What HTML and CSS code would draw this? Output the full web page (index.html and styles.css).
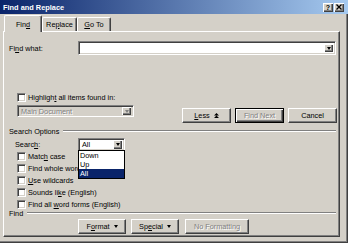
FILE: index.html
```html
<!DOCTYPE html>
<html lang="en">

<head>
    <meta charset="UTF-8">
    <title>Find and Replace</title>
    <link rel="stylesheet" href="styles.css">
</head>

<body>
    <div class="dialog">
        <!--title bar-->
        <div class="titlebar">
            <span class="title">Find and Replace</span>
            <div class="tbtns">
                <span class="tbtn">?</span>
                <span class="tbtn">
                    <svg width="6" height="6" viewBox="0 0 6 6"><path d="M0.5 0.5L5.5 5.5M5.5 0.5L0.5 5.5" stroke="#000" stroke-width="1.3"/></svg>
                </span>
            </div>
        </div>

        <div class="body">
            <!--tabs-->
            <div class="tabs">
                <div class="tab active t-find"><span>Fin<u>d</u></span></div>
                <div class="tab t-replace"><span>Re<u>p</u>lace</span></div>
                <div class="tab t-goto"><span><u>G</u>o To</span></div>
            </div>

            <div class="panel">
                <!--find what-->
                <div class="row row-find">
                    <label class="lbl">Fi<u>n</u>d what:</label>
                    <div class="combo combo-find">
                        <span class="val"></span>
                        <span class="arrow"><i class="tri"></i></span>
                    </div>
                </div>

                <!--highlight-->
                <div class="row row-hl">
                    <span class="chk"></span>
                    <span>Highligh<u>t</u> all items found in:</span>
                </div>

                <div class="row row-doc">
                    <div class="combo combo-doc disabled">
                        <span class="val">Main Document</span>
                        <span class="arrow"><i class="tri"></i></span>
                    </div>
                    <div class="btns">
                        <span class="btn"><span><u>L</u>ess</span>
                            <svg class="dbl" width="5" height="5" viewBox="0 0 5 5"><path d="M2.5 0L5 2.5H0zM2.5 2.5L5 5H0z" fill="#000"/></svg>
                        </span>
                        <span class="btn default disabled"><span>Find Next</span></span>
                        <span class="btn"><span>Cancel</span></span>
                    </div>
                </div>

                <!--search options-->
                <div class="group">
                    <span>Search Options</span>
                    <span class="line"></span>
                </div>

                <div class="row row-search">
                    <label class="lbl">Searc<u>h</u>:</label>
                    <div class="dd">
                        <div class="combo combo-search">
                            <span class="val">All</span>
                            <span class="arrow"><i class="tri"></i></span>
                        </div>
                        <ul class="list">
                            <li>Down</li>
                            <li>Up</li>
                            <li class="sel">All</li>
                        </ul>
                    </div>
                </div>

                <div class="opts">
                    <div class="opt"><span class="chk"></span><span>Matc<u>h</u> case</span></div>
                    <div class="opt"><span class="chk"></span><span>Find whole words onl<u>y</u></span></div>
                    <div class="opt"><span class="chk"></span><span><u>U</u>se wildcards</span></div>
                    <div class="opt"><span class="chk"></span><span>Sounds li<u>k</u>e (English)</span></div>
                    <div class="opt"><span class="chk"></span><span>Find all <u>w</u>ord forms (English)</span></div>
                </div>

                <!--find group-->
                <div class="group group-find">
                    <span>Find</span>
                    <span class="line"></span>
                </div>

                <div class="row row-fmt">
                    <span class="btn b-fmt"><span>F<u>o</u>rmat</span><i class="tri"></i></span>
                    <span class="btn b-spc"><span>Sp<u>e</u>cial</span><i class="tri"></i></span>
                    <span class="btn b-nof disabled"><span>No Formatting</span></span>
                </div>
            </div>
        </div>
    </div>
</body>

</html>
```

FILE: styles.css
```css
html,
body,
ul {
    margin: 0;
    padding: 0;
}

body {
    background: #d4d0c8;
    font: 7.3px "Liberation Sans", Arial, sans-serif;
    color: #000;
    overflow: hidden;
}

u {
    text-decoration: underline;
}

/*dialog frame*/
.dialog {
    width: 348px;
    height: 243px;
    background: #d4d0c8;
    box-shadow: inset -1px -1px #404040, inset -2px -2px #808080;
}

/*title bar*/
.titlebar {
    height: 14px;
    padding: 0 4px 0 3px;
    display: flex;
    align-items: center;
    justify-content: space-between;
    background: linear-gradient(to right, #0a246a, #a6caf0);
    color: #fff;
    font-weight: bold;
    font-size: 7.4px;
}

.tbtns {
    display: flex;
    gap: 1px;
}

.tbtn {
    width: 10px;
    height: 9px;
    display: flex;
    align-items: center;
    justify-content: center;
    background: #d4d0c8;
    color: #000;
    font-size: 7px;
    box-shadow: inset 1px 1px #fff, inset -1px -1px #404040, inset -2px -2px #808080;
}

.body {
    padding: 1px 0 0 3px;
}

/*tabs*/
.tabs {
    display: flex;
    align-items: flex-end;
    height: 16px;
    padding-left: 1px;
}

.tab {
    height: 14px;
    box-sizing: border-box;
    display: flex;
    align-items: center;
    justify-content: center;
    border: 1px solid;
    border-color: #fff #404040 transparent #fff;
    border-bottom: none;
    border-radius: 2px 2px 0 0;
    box-shadow: inset -1px 0 #808080;
    background: #d4d0c8;
}

.tab.active {
    height: 17px;
    margin-bottom: -1px;
    position: relative;
    z-index: 1;
}

.t-find {
    width: 38px;
}

.t-replace {
    width: 35px;
}

.t-goto {
    width: 34px;
}

/*panel*/
.panel {
    width: 337px;
    height: 206px;
    box-sizing: border-box;
    border: 1px solid;
    border-color: #fff #404040 #404040 #fff;
    box-shadow: inset -1px -1px #808080;
    display: flex;
    flex-direction: column;
}

.row {
    display: flex;
    align-items: center;
}

.lbl {
    width: 69px;
    padding-left: 5px;
}

/*combo box*/
.combo {
    box-sizing: border-box;
    display: flex;
    align-items: center;
    justify-content: space-between;
    padding: 2px 2px 2px 3px;
    background: #fff;
    border: 1px solid;
    border-color: #808080 #fff #fff #808080;
    box-shadow: inset 1px 1px #404040, inset -1px -1px #d4d0c8;
}

.arrow {
    width: 9px;
    align-self: stretch;
    display: flex;
    align-items: center;
    justify-content: center;
    background: #d4d0c8;
    box-shadow: inset 1px 1px #fff, inset -1px -1px #404040, inset -2px -2px #808080;
}

.tri {
    display: inline-block;
    width: 0;
    height: 0;
    border-left: 2.5px solid transparent;
    border-right: 2.5px solid transparent;
    border-top: 3px solid #000;
}

.combo.disabled {
    background: #d4d0c8;
}

.disabled .val,
.btn.disabled {
    color: #808080;
    text-shadow: 1px 1px #fff;
}

.disabled .tri {
    border-top-color: #808080;
}

.row-find {
    margin-top: 9px;
    height: 14px;
}

.combo-find {
    width: 258px;
    height: 14px;
}

/*checkbox*/
.chk {
    width: 9px;
    height: 9px;
    box-sizing: border-box;
    margin-right: 2px;
    background: #fff;
    border: 1px solid;
    border-color: #808080 #fff #fff #808080;
    box-shadow: inset 1px 1px #404040, inset -1px -1px #d4d0c8;
}

.row-hl {
    margin-top: 37px;
    height: 10px;
    padding-left: 13px;
}

.row-doc {
    margin-top: 3px;
    padding: 0 2px 0 13px;
    align-items: flex-start;
}

.combo-doc {
    width: 117px;
    height: 12px;
    padding-top: 1px;
    padding-bottom: 1px;
}

.btns {
    display: flex;
    gap: 4px;
    margin: 3px 0 0 auto;
}

/*buttons*/
.btn {
    width: 49px;
    height: 15px;
    box-sizing: border-box;
    display: flex;
    align-items: center;
    justify-content: center;
    gap: 4px;
    background: #d4d0c8;
    border: 1px solid;
    border-color: #fff #404040 #404040 #fff;
    box-shadow: inset -1px -1px #808080;
}

.btn.default {
    border-color: #000;
    box-shadow: inset 1px 1px #fff, inset -1px -1px #404040, inset -2px -2px #808080;
}

/*group label*/
.group {
    display: flex;
    align-items: center;
    height: 10px;
    margin-top: 3px;
    padding: 0 3px 0 5px;
}

.group .line {
    flex: 1;
    margin-left: 4px;
    height: 0;
    border-top: 1px solid #808080;
    border-bottom: 1px solid #fff;
}

.row-search {
    margin-top: 2px;
    height: 13px;
}

.row-search .lbl {
    width: 63px;
    padding-left: 11px;
}

.dd {
    position: relative;
}

.combo-search {
    width: 47px;
    height: 13px;
    padding-top: 1px;
    padding-bottom: 1px;
}

/*open drop list, lies over the options below*/
.list {
    position: absolute;
    top: 12px;
    left: 0;
    z-index: 2;
    width: 47px;
    box-sizing: border-box;
    list-style: none;
    background: #fff;
    border: 1px solid #000;
}

.list li {
    height: 9px;
    line-height: 9px;
    padding-left: 1px;
}

.list .sel {
    background: #0a246a;
    color: #fff;
}

.opts {
    display: flex;
    flex-direction: column;
    padding-left: 13px;
    margin-top: -1px;
}

.opt {
    display: flex;
    align-items: center;
    height: 12px;
}

.group-find {
    margin-top: -2px;
}

.row-fmt {
    margin-top: 1px;
    padding-left: 74px;
    gap: 5px;
}

.b-fmt,
.b-spc {
    width: 48px;
}

.b-nof {
    width: 64px;
    margin-left: 1px;
}
```
